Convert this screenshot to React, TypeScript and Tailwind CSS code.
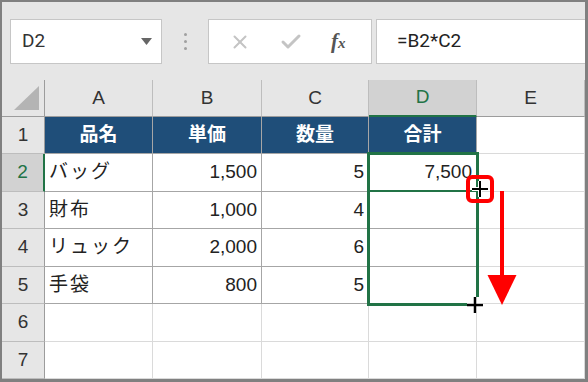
import { X, Check } from 'lucide-react';

const cols = ['A', 'B', 'C', 'D', 'E'];

type Row = { n: number; cells: (string | null)[] };

const rows: Row[] = [
  { n: 1, cells: ['品名', '単価', '数量', '合計', null] },
  { n: 2, cells: ['バッグ', '1,500', '5', '7,500', null] },
  { n: 3, cells: ['財布', '1,000', '4', null, null] },
  { n: 4, cells: ['リュック', '2,000', '6', null, null] },
  { n: 5, cells: ['手袋', '800', '5', null, null] },
  { n: 6, cells: [null, null, null, null, null] },
  { n: 7, cells: [null, null, null, null, null] },
];

const font = { fontFamily: '"Liberation Sans", "Noto Sans CJK JP", sans-serif' };

function Cell({ row, col, value }: { row: number; col: number; value: string | null }) {
  const inTable = row <= 5 && col <= 3;
  const header = row === 1 && col <= 3;
  const border = inTable ? 'border-[#a6a6a6]' : 'border-[#dadada]';
  if (header) {
    return (
      <div className="flex items-center justify-center bg-[#1f4e79] border-r border-b border-[#a6a6a6] text-white font-bold text-[19px]">
        {value}
      </div>
    );
  }
  const align = col === 0 ? 'justify-start pl-[4px] tracking-[2px]' : 'justify-end pr-[4px]';
  return (
    <div className={`flex items-center bg-white border-r border-b ${border} ${align} text-[19px] text-[#222]`}>
      {value}
    </div>
  );
}

export default function App() {
  return (
    <div className="w-[588px] h-[382px] border-t-2 border-l-2 border-r-[3px] border-b-[3px] border-[#808080] bg-[#e6e6e6] overflow-hidden relative" style={font}>
      {/* formula bar */}
      <div className="h-[78px] flex items-start pt-[17px] pl-[8px]">
        <div className="w-[152px] h-[45px] bg-white border border-[#c6c6c6] flex items-center justify-between pl-[11px] pr-[9px]">
          <span className="text-[19px] text-[#333]" style={{ fontFamily: 'Roboto, "Liberation Sans", sans-serif' }}>D2</span>
          <svg width="11" height="7" viewBox="0 0 11 7"><path d="M0 0h11L5.5 7z" fill="#666" /></svg>
        </div>
        <div className="w-[46px] h-[45px] flex flex-col items-center justify-center gap-[4px]">
          <span className="w-[3px] h-[3px] rounded-full bg-[#a0a0a0]" />
          <span className="w-[3px] h-[3px] rounded-full bg-[#a0a0a0]" />
          <span className="w-[3px] h-[3px] rounded-full bg-[#a0a0a0]" />
        </div>
        <div className="w-[164px] h-[45px] bg-white border border-[#c6c6c6] flex items-center pl-[20px]">
          <X className="w-[22px] h-[22px] text-[#c4c4c4]" strokeWidth={2.2} />
          <Check className="w-[24px] h-[24px] text-[#c4c4c4] ml-[28px]" strokeWidth={3} />
          <span className="ml-[28px] text-[21px] leading-none text-[#555] italic font-bold" style={{ fontFamily: '"Liberation Serif", serif' }}>
            f<span className="text-[15px]">x</span>
          </span>
        </div>
        <div className="flex-1 ml-[4px] h-[45px] bg-white border border-[#c6c6c6] border-r-0 flex items-center pl-[20px]">
          <span className="text-[19px] text-[#222]" style={{ fontFamily: 'Roboto, "Liberation Sans", sans-serif' }}>=B2*C2</span>
        </div>
      </div>

      {/* sheet grid */}
      <div className="grid grid-cols-[43px_108px_109px_107px_108px_1fr] grid-rows-[37px_37px_38px_37px_38px_37px_38px_37px]">
        <div className="bg-[#e6e6e6] border-r border-b border-[#9c9c9c] flex items-end justify-end pr-[5px] pb-[6px]">
          <svg width="25" height="24" viewBox="0 0 25 24"><path d="M25 0v24H0z" fill="#b4b4b4" /></svg>
        </div>
        {cols.map((c) => (
          <div
            key={c}
            className={`flex items-center justify-center text-[19px] border-r ${
              c === 'D'
                ? 'bg-[#d2d2d2] text-[#217346] border-b-2 border-b-[#217346] border-r-[#bdbdbd]'
                : 'bg-[#e6e6e6] text-[#333] border-b border-[#bdbdbd] border-b-[#9c9c9c]'
            }`}
          >
            {c}
          </div>
        ))}
        {rows.map((r) => (
          <div key={r.n} className="contents">
            <div
              className={`flex items-center justify-center text-[19px] border-b ${
                r.n === 2
                  ? 'bg-[#d2d2d2] text-[#217346] border-r-2 border-r-[#217346] border-b-[#bdbdbd]'
                  : 'bg-[#e6e6e6] text-[#333] border-r border-r-[#9c9c9c] border-b-[#bdbdbd]'
              }`}
            >
              {r.n}
            </div>
            {r.cells.map((v, i) => (
              <Cell key={i} row={r.n} col={i} value={v} />
            ))}
          </div>
        ))}
      </div>

      {/* selection D2:D5 */}
      <div className="absolute left-[365px] top-[150px] w-[112px] h-[154px] border-t-[3px] border-l-[3px] border-[#217346]" />
      <div className="absolute left-[365px] top-[188px] w-[110px] h-[2px] bg-[#217346]" />
      <div className="absolute left-[474px] top-[150px] w-[3px] h-[145px] bg-[#217346]" />
      <div className="absolute left-[365px] top-[301px] w-[100px] h-[3px] bg-[#217346]" />

      {/* fill handle cursor + highlight */}
      <div className="absolute left-[464px] top-[173px] w-[28px] h-[28px] border-4 border-[#ff0000] rounded-[6px]" />
      <svg className="absolute left-[469px] top-[178px]" width="18" height="18" viewBox="0 0 18 18">
        <path d="M9 1v16M1 9h16" stroke="#fff" strokeWidth="4" />
        <path d="M9 1v16M1 9h16" stroke="#000" strokeWidth="2" />
      </svg>
      <svg className="absolute left-[464px] top-[294px]" width="18" height="18" viewBox="0 0 18 18">
        <path d="M9 1v16M1 9h16" stroke="#fff" strokeWidth="4" />
        <path d="M9 1v16M1 9h16" stroke="#000" strokeWidth="2.5" />
      </svg>

      {/* red arrow */}
      <svg className="absolute left-[484px] top-[189px]" width="32" height="114" viewBox="0 0 32 114">
        <rect x="14" y="0" width="4" height="86" fill="#ff0000" />
        <path d="M1.5 84h29L16 114z" fill="#ff0000" />
      </svg>
    </div>
  );
}
